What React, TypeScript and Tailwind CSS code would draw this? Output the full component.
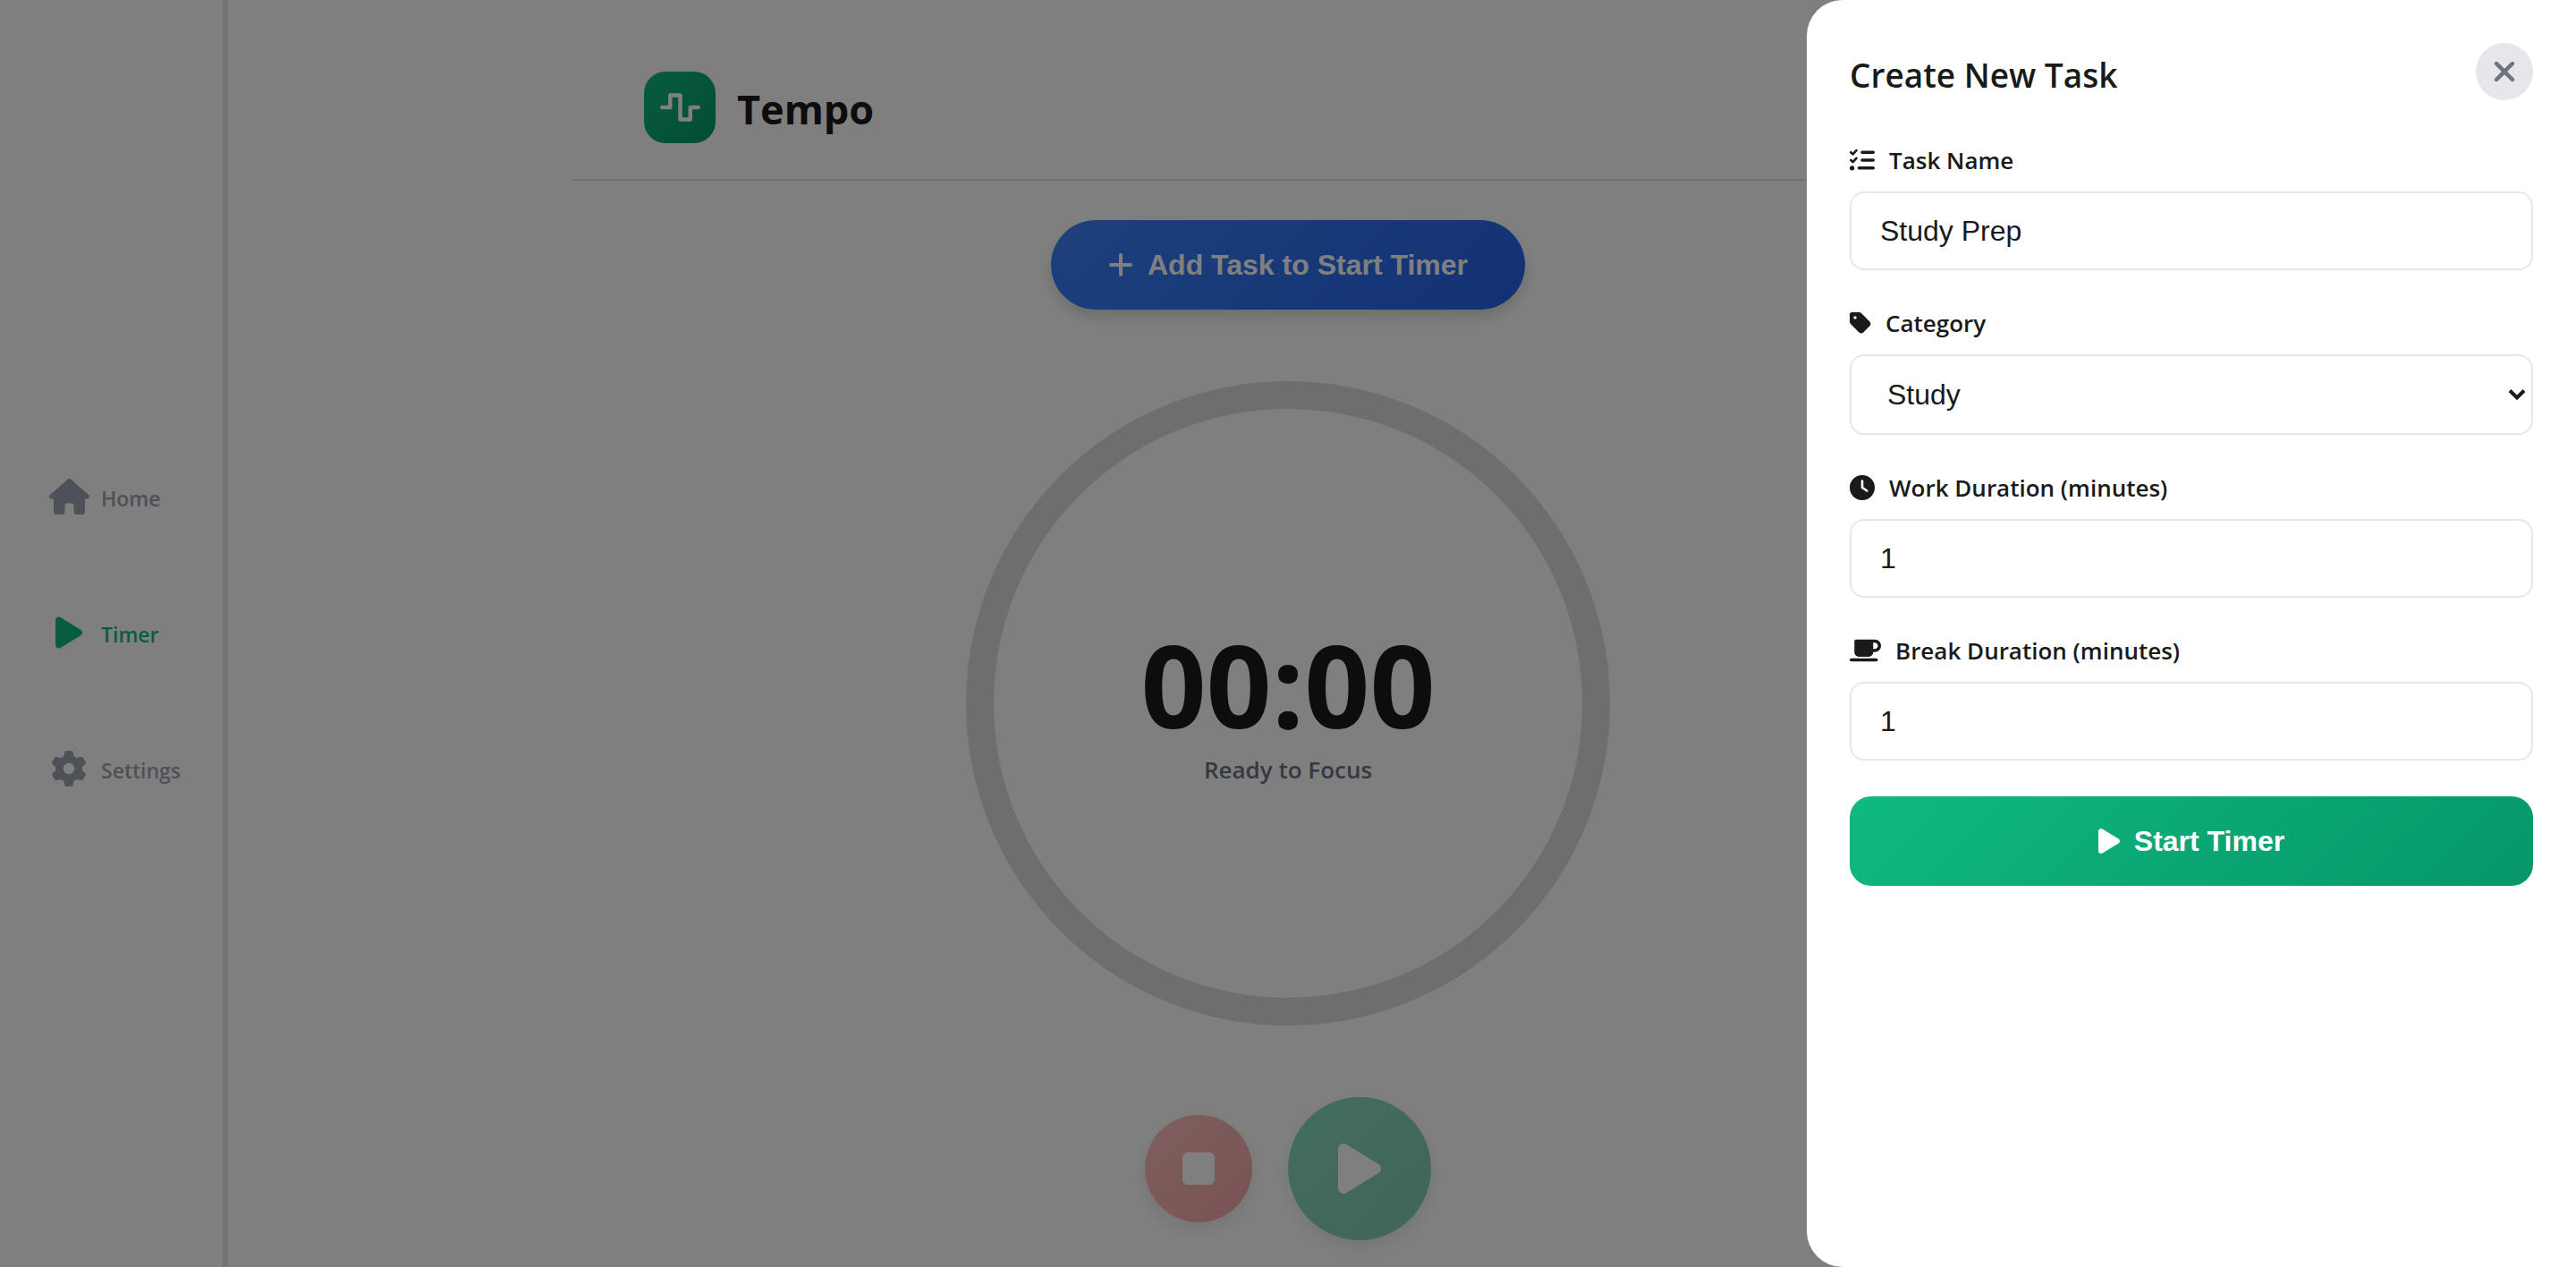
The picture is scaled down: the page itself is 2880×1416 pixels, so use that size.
import { useState } from "react";
import type { ReactNode } from "react";
import {
  FaClock,
  FaGear,
  FaHouse,
  FaListCheck,
  FaMugSaucer,
  FaPlay,
  FaPlus,
  FaStop,
  FaTag,
  FaWaveSquare,
  FaXmark,
} from "react-icons/fa6";

const inputClass =
  "block h-[88px] w-full rounded-2xl border-2 border-[#e5e7eb] bg-white px-8 font-['Liberation_Sans',sans-serif] text-[32px] text-[#1a1a1a] outline-none";

function NavItem({ icon, label, active }: { icon: ReactNode; label: string; active?: boolean }) {
  return (
    <a
      href="#"
      className={
        active
          ? "flex h-10 items-center gap-3 text-[23px] leading-8 font-semibold text-[#10b981]"
          : "flex h-10 items-center gap-3 text-[23px] leading-8 font-semibold text-[#9ca3af]"
      }
    >
      <span className="flex w-12 justify-center text-[40px]">{icon}</span>
      <span className="pt-1">{label}</span>
    </a>
  );
}

function Field({ id, icon, label, children }: { id: string; icon: ReactNode; label: string; children: ReactNode }) {
  return (
    <div className="mb-10">
      <label
        htmlFor={id}
        className="mb-4 flex items-center gap-4 text-[26px] leading-[38px] font-semibold text-[#1a1a1a]"
      >
        <span className="text-[28px]">{icon}</span>
        {label}
      </label>
      {children}
    </div>
  );
}

function TaskDrawer() {
  const [name, setName] = useState("Study Prep");
  const [category, setCategory] = useState("Study");
  const [work, setWork] = useState("1");
  const [rest, setRest] = useState("1");

  return (
    <div className="fixed inset-0 flex justify-end bg-black/50">
      <section
        role="dialog"
        aria-labelledby="drawer-title"
        className="w-[860px] max-w-full overflow-y-auto rounded-l-[40px] bg-white p-12"
      >
        <header className="mb-12 flex items-center justify-between">
          <h2 id="drawer-title" className="pt-2 text-[37px] leading-[52px] font-semibold text-[#1a1a1a]">
            Create New Task
          </h2>
          <button
            type="button"
            aria-label="Close"
            className="flex size-16 items-center justify-center rounded-full bg-[#e5e7eb] text-4xl text-[#6b7280]"
          >
            <FaXmark />
          </button>
        </header>

        <form onSubmit={(e) => e.preventDefault()}>
          <Field id="task-name" icon={<FaListCheck />} label="Task Name">
            <input
              id="task-name"
              type="text"
              className={inputClass}
              value={name}
              onChange={(e) => setName(e.target.value)}
            />
          </Field>
          <Field id="category" icon={<FaTag className="w-6" />} label="Category">
            <div className="relative">
              <select
                id="category"
                className="block h-[90px] w-full appearance-none rounded-2xl border-2 border-[#e5e7eb] bg-white px-10 font-['Liberation_Sans',sans-serif] text-[32px] text-[#1a1a1a] outline-none"
                value={category}
                onChange={(e) => setCategory(e.target.value)}
              >
                <option>Study</option>
                <option>Work</option>
                <option>Personal</option>
              </select>
              <svg
                viewBox="0 0 20 14"
                className="pointer-events-none absolute top-1/2 right-2 h-[14px] w-5 -translate-y-1/2"
                fill="none"
                stroke="#1a1a1a"
                strokeWidth="4"
                aria-hidden="true"
              >
                <path d="M2 2.5l8 8 8-8" />
              </svg>
            </div>
          </Field>
          <Field id="work" icon={<FaClock />} label="Work Duration (minutes)">
            <input
              id="work"
              type="text"
              inputMode="numeric"
              className={inputClass}
              value={work}
              onChange={(e) => setWork(e.target.value)}
            />
          </Field>
          <Field id="break" icon={<FaMugSaucer className="w-[35px]" />} label="Break Duration (minutes)">
            <input
              id="break"
              type="text"
              inputMode="numeric"
              className={inputClass}
              value={rest}
              onChange={(e) => setRest(e.target.value)}
            />
          </Field>
          <button
            type="submit"
            className="flex h-[100px] w-full items-center justify-center gap-4 rounded-3xl bg-[linear-gradient(135deg,#10b981,#059669)] font-['Liberation_Sans',sans-serif] text-[32px] font-bold text-white"
          >
            <FaPlay className="w-6" />
            Start Timer
          </button>
        </form>
      </section>
    </div>
  );
}

export default function App() {
  return (
    <div className="grid min-h-screen grid-cols-[255px_1fr_255px] bg-white font-['Open_Sans','Noto_Sans',sans-serif]">
      <aside className="flex flex-col border-r-6 border-[#e5e7eb]">
        <nav className="my-auto flex flex-col gap-28 pb-0.5 pl-[53px]">
          <NavItem icon={<FaHouse className="w-[45px]" />} label="Home" />
          <NavItem icon={<FaPlay />} label="Timer" active />
          <NavItem icon={<FaGear />} label="Settings" />
        </nav>
      </aside>

      <div className="mx-auto w-full max-w-[1600px]">
        <header className="flex items-center gap-6 border-b-2 border-[#e0e0e0] px-20 pt-20 pb-10">
          <div className="flex size-20 items-center justify-center rounded-3xl bg-[linear-gradient(135deg,#10b981,#059669)] text-4xl text-white">
            <FaWaveSquare className="w-[45px]" />
          </div>
          <h1 className="pt-1 text-[45px] leading-[64px] font-bold text-[#1a1a1a]">Tempo</h1>
        </header>

        <main className="flex flex-col items-center pt-11 pb-[30px]">
          <button
            type="button"
            className="flex h-[100px] items-center gap-4 rounded-full bg-[linear-gradient(135deg,#3b82f6,#2563eb)] px-16 font-['Liberation_Sans',sans-serif] text-[32px] font-bold text-white shadow-[0_8px_16px_rgba(0,0,0,0.15)]"
          >
            <FaPlus className="w-7" />
            Add Task to Start Timer
          </button>

          <section className="mt-20 flex size-[720px] flex-col items-center justify-center rounded-full border-[31px] border-[#dcdcdc]">
            <p className="text-[128px] leading-[144px] font-bold text-[#1a1a1a]">00:00</p>
            <p className="mt-1 text-[26px] leading-[38px] font-semibold text-[#6b7280]">Ready to Focus</p>
          </section>

          <div className="mt-20 flex items-center gap-10">
            <button
              type="button"
              aria-label="Stop"
              disabled
              className="flex size-[120px] items-center justify-center rounded-full bg-[linear-gradient(135deg,#f98080,#ef5050)] text-5xl text-white opacity-50 shadow-[0_8px_16px_rgba(0,0,0,0.15)]"
            >
              <FaStop />
            </button>
            <button
              type="button"
              aria-label="Play"
              disabled
              className="flex size-40 items-center justify-center rounded-full bg-[linear-gradient(135deg,#10b981,#059669)] text-[64px] text-white opacity-50 shadow-[0_8px_16px_rgba(0,0,0,0.15)]"
            >
              <FaPlay />
            </button>
          </div>
        </main>
      </div>

      <TaskDrawer />
    </div>
  );
}
